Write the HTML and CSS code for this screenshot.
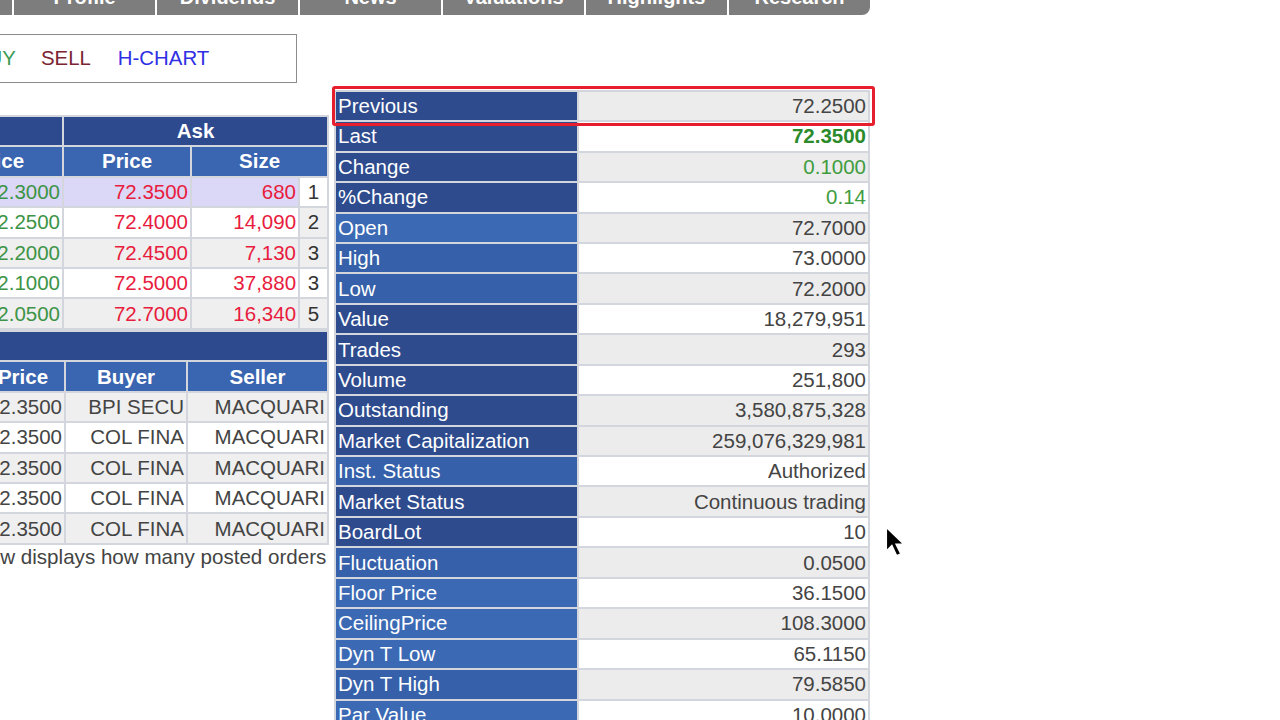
FILE: index.html
```html
<!DOCTYPE html>
<html>
<head>
    <title>Quote</title>
    <link rel="stylesheet" href="styles.css">
</head>
<body>
<div class="tabs">
  <div class="tab tab-first">Quote</div>
  <div class="tab">Profile</div>
  <div class="tab">Dividends</div>
  <div class="tab">News</div>
  <div class="tab">Valuations</div>
  <div class="tab">Highlights</div>
  <div class="tab tab-last">Research</div>
</div>

<div class="main">
  <div class="left">
    <div class="actions">
      <span class="buy">BUY</span>
      <span class="sell">SELL</span>
      <span class="hchart">H-CHART</span>
    </div>

    <table class="grid book">
      <colgroup>
        <col class="c-count"><col class="c-size"><col class="c-price">
        <col class="c-price"><col class="c-size"><col class="c-count">
      </colgroup>
      <tr class="hd1">
        <th colspan="3">Bid</th>
        <th colspan="3">Ask</th>
      </tr>
      <tr class="hd2">
        <th colspan="2">Size</th>
        <th>Price</th>
        <th>Price</th>
        <th colspan="2">Size</th>
      </tr>
      <tr class="r-sel">
        <td class="cnt">2</td><td class="num bid">1,200</td><td class="num bid">72.3000</td>
        <td class="num ask">72.3500</td><td class="num ask">680</td><td class="cnt">1</td>
      </tr>
      <tr>
        <td class="cnt">4</td><td class="num bid">8,450</td><td class="num bid">72.2500</td>
        <td class="num ask">72.4000</td><td class="num ask">14,090</td><td class="cnt alt">2</td>
      </tr>
      <tr class="alt">
        <td class="cnt">3</td><td class="num bid">5,300</td><td class="num bid">72.2000</td>
        <td class="num ask">72.4500</td><td class="num ask">7,130</td><td class="cnt">3</td>
      </tr>
      <tr>
        <td class="cnt">1</td><td class="num bid">2,000</td><td class="num bid">72.1000</td>
        <td class="num ask">72.5000</td><td class="num ask">37,880</td><td class="cnt">3</td>
      </tr>
      <tr class="alt">
        <td class="cnt">2</td><td class="num bid">3,750</td><td class="num bid">72.0500</td>
        <td class="num ask">72.7000</td><td class="num ask">16,340</td><td class="cnt">5</td>
      </tr>
    </table>

    <table class="grid trades">
      <colgroup>
        <col class="c-time"><col class="c-tprice"><col class="c-buyer"><col class="c-seller">
      </colgroup>
      <tr class="hd1">
        <th colspan="4" class="band">Trades</th>
      </tr>
      <tr class="hd2">
        <th>Time</th><th>Price</th><th>Buyer</th><th>Seller</th>
      </tr>
      <tr class="alt"><td class="num">14:28:05</td><td class="num">72.3500</td><td class="num">BPI SECU</td><td class="num">MACQUARI</td></tr>
      <tr><td class="num">14:27:51</td><td class="num">72.3500</td><td class="num">COL FINA</td><td class="num">MACQUARI</td></tr>
      <tr class="alt"><td class="num">14:27:51</td><td class="num">72.3500</td><td class="num">COL FINA</td><td class="num">MACQUARI</td></tr>
      <tr><td class="num">14:27:50</td><td class="num">72.3500</td><td class="num">COL FINA</td><td class="num">MACQUARI</td></tr>
      <tr class="alt"><td class="num">14:27:50</td><td class="num">72.3500</td><td class="num">COL FINA</td><td class="num">MACQUARI</td></tr>
    </table>

    <p class="note">Last column in each row displays how many posted orders are at that price.</p>
  </div>

  <div class="right">
    <table class="quote">
      <colgroup><col class="c-label"><col class="c-value"></colgroup>
      <tr><td class="lab lab-a">Previous</td><td class="val alt">72.2500</td></tr>
      <tr><td class="lab lab-a">Last</td><td class="val last">72.3500</td></tr>
      <tr><td class="lab lab-a">Change</td><td class="val alt up">0.1000</td></tr>
      <tr><td class="lab lab-a">%Change</td><td class="val up">0.14</td></tr>
      <tr><td class="lab lab-c">Open</td><td class="val alt">72.7000</td></tr>
      <tr><td class="lab lab-b">High</td><td class="val">73.0000</td></tr>
      <tr><td class="lab lab-b">Low</td><td class="val alt">72.2000</td></tr>
      <tr><td class="lab lab-a">Value</td><td class="val">18,279,951</td></tr>
      <tr><td class="lab lab-a">Trades</td><td class="val alt">293</td></tr>
      <tr><td class="lab lab-a">Volume</td><td class="val">251,800</td></tr>
      <tr><td class="lab lab-a">Outstanding</td><td class="val alt">3,580,875,328</td></tr>
      <tr><td class="lab lab-a">Market Capitalization</td><td class="val alt">259,076,329,981</td></tr>
      <tr><td class="lab lab-b">Inst. Status</td><td class="val">Authorized</td></tr>
      <tr><td class="lab lab-a">Market Status</td><td class="val alt">Continuous trading</td></tr>
      <tr><td class="lab lab-a">BoardLot</td><td class="val">10</td></tr>
      <tr><td class="lab lab-b">Fluctuation</td><td class="val alt">0.0500</td></tr>
      <tr><td class="lab lab-c">Floor Price</td><td class="val">36.1500</td></tr>
      <tr><td class="lab lab-c">CeilingPrice</td><td class="val alt">108.3000</td></tr>
      <tr><td class="lab lab-c">Dyn T Low</td><td class="val">65.1150</td></tr>
      <tr><td class="lab lab-b">Dyn T High</td><td class="val alt">79.5850</td></tr>
      <tr><td class="lab lab-c">Par Value</td><td class="val">10.0000</td></tr>
    </table>
    <div class="highlight"></div>
  </div>
</div>

<svg class="cursor" width="22" height="32" viewBox="0 0 16 23">
  <path d="M1 1 L1 18 L5 14 L8.5 21.5 L11.5 20.2 L8 13 L13.5 13 Z" fill="#000" stroke="#fff" stroke-width="1"/>
</svg>
</body>
</html>
```

FILE: styles.css
```css
html, body {
  height: 100%;
  margin: 0;
  overflow: hidden;
}
body {
  position: relative;
  background: #fff;
  color: #444;
  font: 20px "Liberation Sans", Arial, sans-serif;
}

/* tab strip, mostly scrolled out of view */
.tabs {
  display: flex;
  gap: 2px;
  height: 34px;
  margin-top: -19px;
}
.tab {
  flex: none;
  width: 141px;
  background: #7d7d7d;
  color: #fff;
  font-weight: bold;
  line-height: 32px;
  text-align: center;
}
.tab-first {
  margin-left: -129px;
}
.tab-last {
  border-bottom-right-radius: 8px;
}

.main {
  display: flex;
  align-items: flex-start;
}
.left {
  flex: none;
  width: 532px;
  margin-left: -203px;
}
.right {
  position: relative;
  flex: none;
  margin: 74.8px 0 0 5px;
}

.actions {
  display: flex;
  align-items: center;
  gap: 25px;
  box-sizing: border-box;
  width: 338px;
  height: 49px;
  margin: 19px 0 0 162px;
  padding-left: 14px;
  border: 1px solid #8c8c8c;
  font-size: 20.4px;
}
.buy { color: #3b9a52; }
.sell { color: #7b2432; }
.hchart {
  margin-left: 2px;
  color: #2f2fe4;
}

/* shared grid look */
.grid, .quote {
  border-collapse: separate;
  border-spacing: 2px;
  background: #d3d6dc;
  table-layout: fixed;
  font-size: 20.5px;
}
.grid {
  width: 532px;
}
.grid th, .grid td, .quote td {
  height: 28.45px;
  padding: 0 2px;
  line-height: 28px;
  white-space: nowrap;
  overflow: hidden;
  box-sizing: border-box;
}
.grid td {
  background: #fff;
}
.grid tr.alt td, .grid td.alt {
  background: #efefef;
}
.grid tr.r-sel td {
  background: #dbd7f6;
}
.grid tr.r-sel td.cnt {
  background: #fff;
}
.hd1 th {
  background: #2e4a8f;
  color: #fff;
  font-weight: bold;
}
.hd2 th {
  background: #3a65b0;
  color: #fff;
  font-weight: bold;
}
.band {
  text-align: left;
}

.book {
  margin-top: 31.8px;
}
.c-count { width: 27px; }
.c-size { width: 106px; }
.c-price { width: 126px; }
.c-time { width: 181px; }
.c-tprice { width: 82px; }
.c-buyer { width: 120px; }
.c-seller { width: 139px; }

.num {
  text-align: right;
}
.cnt {
  text-align: center;
  color: #333;
}
.bid { color: #3d9447; }
.ask { color: #e81c3e; }

.note {
  width: 540px;
  margin: 0 0 0 -4px;
  padding-top: 1px;
  font-size: 20.6px;
  line-height: 22px;
}

/* quote details */
.c-label { width: 241px; }
.c-value { width: 289px; }
.lab {
  color: #fff;
  padding-left: 3px;
}
.lab-a { background: #2e4b8e; }
.lab-b { background: #3660a9; }
.lab-c { background: #3b69b4; }
.val {
  background: #fff;
  text-align: right;
}
.val.alt {
  background: #ececec;
}
.last {
  color: #2b8a2b;
  font-weight: bold;
}
.up {
  color: #3f9d3f;
}

.highlight {
  position: absolute;
  left: -2px;
  top: -4px;
  width: 543px;
  height: 40px;
  box-sizing: border-box;
  border: 3px solid #e61e2d;
  border-radius: 3px;
}

.cursor {
  position: absolute;
  left: 885px;
  top: 526px;
}
```
